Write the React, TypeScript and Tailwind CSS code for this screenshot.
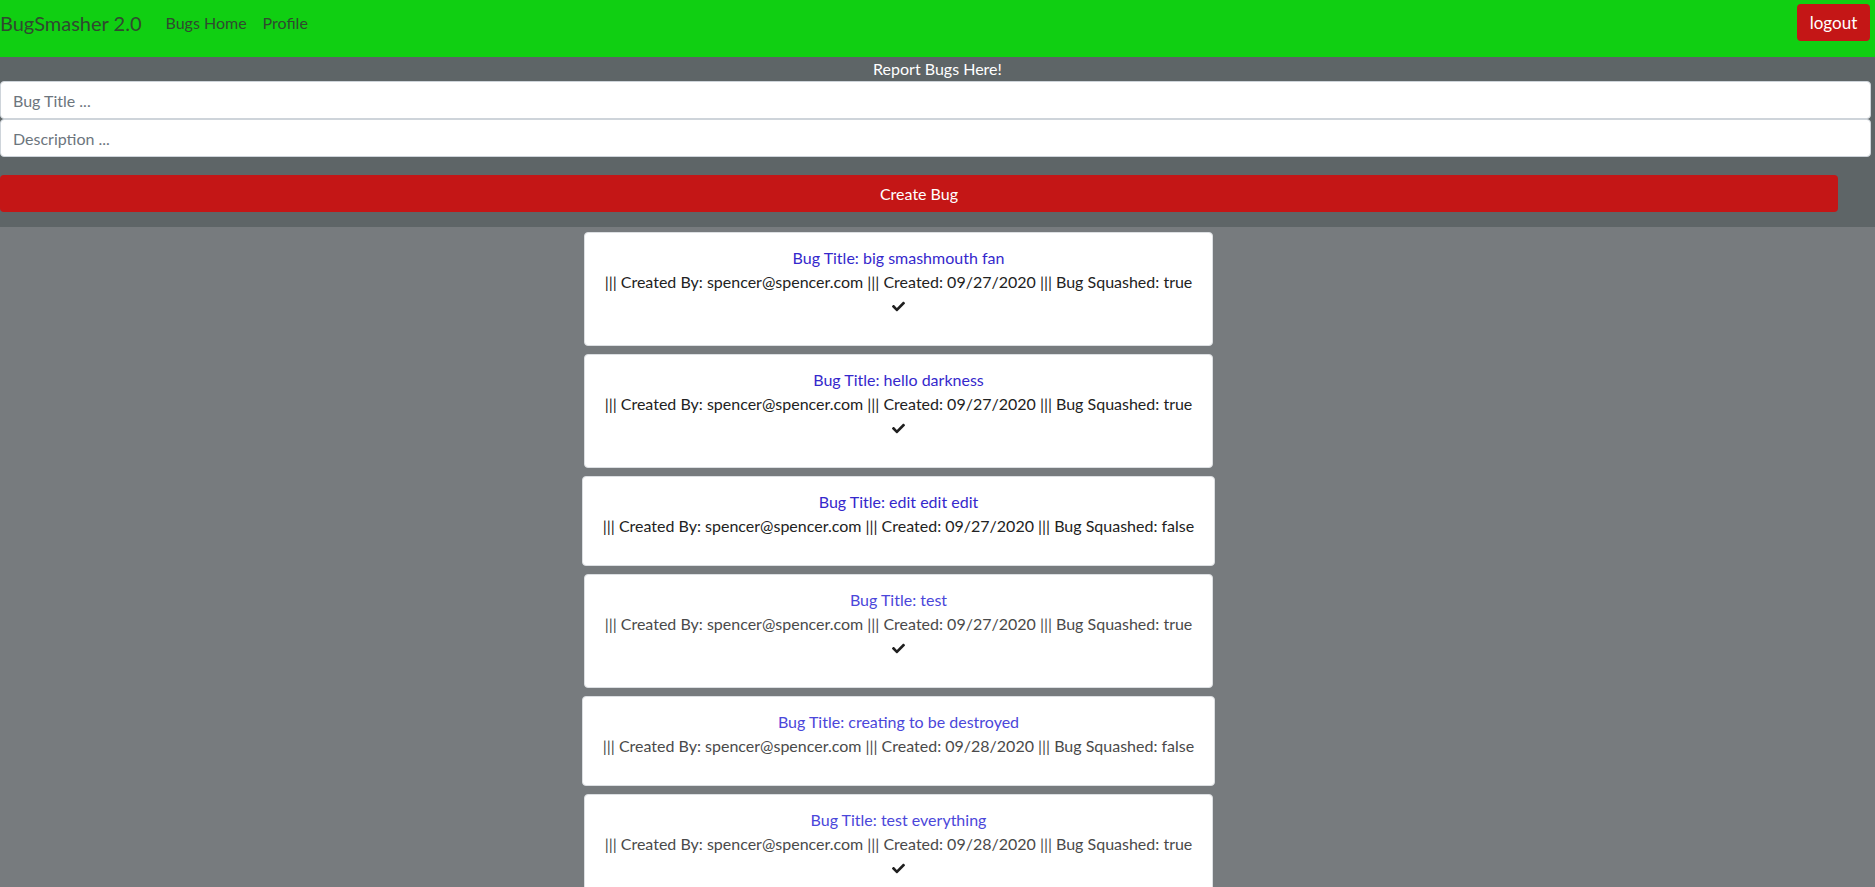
import React from 'react';
import { FaCheck } from 'react-icons/fa';

interface Bug {
  title: string;
  creator: string;
  created: string;
  closed: boolean;
}

const bugs: Bug[] = [
  { title: 'big smashmouth fan', creator: 'spencer@spencer.com', created: '09/27/2020', closed: true },
  { title: 'hello darkness', creator: 'spencer@spencer.com', created: '09/27/2020', closed: true },
  { title: 'edit edit edit', creator: 'spencer@spencer.com', created: '09/27/2020', closed: false },
  { title: 'test', creator: 'spencer@spencer.com', created: '09/27/2020', closed: true },
  { title: 'creating to be destroyed', creator: 'spencer@spencer.com', created: '09/28/2020', closed: false },
  { title: 'test everything', creator: 'spencer@spencer.com', created: '09/28/2020', closed: true },
];

function BugCard({ bug, faded }: { bug: Bug; faded: boolean }) {
  return (
    <div className="bg-white border border-[#dcdfe2] rounded-[4px] px-5 pt-[13px] pb-[27px] text-center leading-6 text-[16px]">
      <p className={faded ? 'text-[#4b47da]' : 'text-[#3528cc]'}>Bug Title: {bug.title}</p>
      <p className={faded ? 'text-[#4a4a4a]' : 'text-[#222222]'}>
        ||| Created By: {bug.creator} ||| Created: {bug.created} ||| Bug Squashed:{' '}
        {bug.closed ? 'true' : 'false'}
      </p>
      {bug.closed && (
        <div className="h-6 flex items-center justify-center">
          <FaCheck className="w-[13px] h-[13px] text-[#1f1f1f]" />
        </div>
      )}
    </div>
  );
}

export default function App() {
  return (
    <div className="min-h-[887px] bg-[#777b7e] font-['Lato',sans-serif]">
      <nav className="h-[57px] bg-[#10cf12] flex items-start justify-between pt-[4px]">
        <div className="flex items-center h-[37px]">
          <span className="text-[20px] text-[#2f4a2f]">BugSmasher 2.0</span>
          <span className="ml-[24px] text-[16px] text-[#2f4a2f]">Bugs Home</span>
          <span className="ml-[16px] text-[16px] text-[#2f4a2f]">Profile</span>
        </div>
        <button className="mr-[5px] w-[73px] h-[37px] rounded-[4px] bg-[#c41616] text-white text-[17px]">
          logout
        </button>
      </nav>

      <section className="bg-[#5e6567] pb-[15px]">
        <h2 className="text-center text-white text-[16px] leading-6">Report Bugs Here!</h2>
        <div className="pr-[4px]">
          <input
            className="block w-full h-[38px] bg-white border border-[#ced4da] rounded-[4px] px-3 text-[16px] text-[#495057] placeholder:text-[#6c757d]"
            placeholder="Bug Title ..."
          />
          <input
            className="block w-full h-[38px] bg-white border border-[#ced4da] rounded-[4px] px-3 text-[16px] text-[#495057] placeholder:text-[#6c757d]"
            placeholder="Description ..."
          />
        </div>
        <div className="mt-[18px] pr-[37px]">
          <button className="w-full h-[37px] rounded-[4px] bg-[#c41616] text-white text-[16px]">
            Create Bug
          </button>
        </div>
      </section>

      <div className="w-[1797px] flex flex-col items-center gap-2 pt-[5px] pb-4">
        {bugs.map((bug, i) => (
          <BugCard key={i} bug={bug} faded={i >= 3} />
        ))}
      </div>
    </div>
  );
}
